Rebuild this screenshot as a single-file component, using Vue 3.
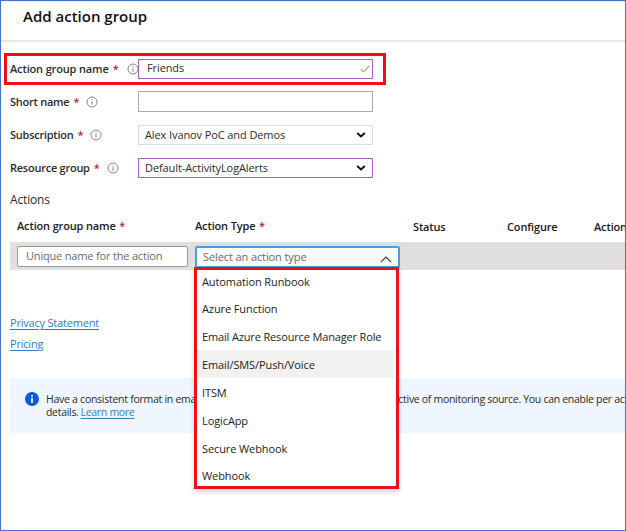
<script setup>
const fields = [
  { label: 'Action group name', value: 'Friends', kind: 'text', tone: 'edited', valid: true },
  { label: 'Short name', value: '', kind: 'text', tone: 'plain' },
  { label: 'Subscription', value: 'Alex Ivanov PoC and Demos', kind: 'select', tone: 'light' },
  { label: 'Resource group', value: 'Default-ActivityLogAlerts', kind: 'select', tone: 'edited' },
]
const actionTypes = [
  'Automation Runbook',
  'Azure Function',
  'Email Azure Resource Manager Role',
  'Email/SMS/Push/Voice',
  'ITSM',
  'LogicApp',
  'Secure Webhook',
  'Webhook',
]
const hovered = 'Email/SMS/Push/Voice'
</script>

<template>
  <div class="blade">
    <header class="title-bar"><h1>Add action group</h1></header>

    <section class="form">
      <div v-for="(f, i) in fields" :key="f.label" class="field" :class="{ first: i === 0 }">
        <div class="label">
          <span class="label-text">{{ f.label }}</span><span class="req">*</span>
          <svg class="hint" viewBox="0 0 12 12">
            <circle cx="6" cy="6" r="5" fill="none" stroke="#777" stroke-width=".9" />
            <path d="M6 5.2V8.6M6 3.2V4.2" stroke="#777" stroke-width="1" />
          </svg>
        </div>
        <div class="control" :class="[f.tone, f.kind]">
          <span>{{ f.value }}</span>
          <svg v-if="f.valid" class="check" viewBox="0 0 10 8">
            <path d="M.8 4.2 3.4 6.8 9.2 1" fill="none" stroke="#7fba4c" stroke-width="1.1" />
          </svg>
          <svg v-if="f.kind === 'select'" class="chevron" viewBox="0 0 10 6">
            <path d="M1.2 1 5 4.5 8.8 1" fill="none" stroke="#111" stroke-width="2" />
          </svg>
        </div>
        <div v-if="i === 0" class="callout"></div>
      </div>
    </section>

    <h2>Actions</h2>
    <div class="grid head">
      <span>Action group name <i>*</i></span>
      <span>Action Type <i>*</i></span>
      <span class="low">Status</span>
      <span class="low">Configure</span>
      <span class="low">Actions</span>
    </div>
    <div class="grid entry">
      <div class="name-input">Unique name for the action</div>
      <div class="type-select">
        <span>Select an action type</span>
        <svg viewBox="0 0 12 7"><path d="M.8 6.2 6 1 11.2 6.2" fill="none" stroke="#333" stroke-width="1.1" /></svg>
        <ul class="menu">
          <li v-for="t in actionTypes" :key="t" :class="{ hovered: t === hovered, wide: t.length > 30 }"><span>{{ t }}</span></li>
        </ul>
      </div>
    </div>

    <nav class="links">
      <a>Privacy Statement</a>
      <a>Pricing</a>
    </nav>

    <aside class="notice">
      <svg viewBox="0 0 14 14">
        <circle cx="7" cy="7" r="7" fill="#0a5bd8" />
        <path d="M7 5.9V10.9M7 3V4.7" stroke="#fff" stroke-width="1.7" />
      </svg>
      <div class="copy">
        <p><span class="lead">Have a consistent format in email notifications,</span><span>irrespective of monitoring source. You can enable per action</span></p>
        <p>details. <a>Learn more</a></p>
      </div>
    </aside>
  </div>
</template>

<style>
body { margin: 0; background: #fff; }
</style>

<style scoped>
* { box-sizing: border-box; }
.blade {
  width: 626px; height: 531px; border: 1px solid #4472c4; overflow: hidden;
  display: flex; flex-direction: column; background: #fff; color: #2b2b2b;
  font: 11px/14px "Open Sans", "Noto Sans", sans-serif;
}
.title-bar { flex: none; height: 41px; border-top: 1px solid #eee; border-bottom: 2px solid #e7e7e7; padding: 2px 0 0 22px; }
h1 { margin: 0; font-size: 15px; line-height: 24px; font-weight: 600; color: #111; letter-spacing: 0; white-space: nowrap; }
.form { flex: none; padding: 10px 0 0 9px; }
.field { position: relative; display: flex; align-items: center; height: 33px; }
.label { width: 128px; display: flex; align-items: center; font-weight: 600; white-space: nowrap; letter-spacing: -.25px; }
.first .label { letter-spacing: -.15px; }
.req { color: #b3262e; margin-left: 4px; }
.hint { width: 12px; height: 12px; margin-left: 7px; flex: none; }
.first .hint { margin-left: 8px; }
.control { width: 235px; height: 20px; border: 1px solid #aaa; display: flex; align-items: center; justify-content: space-between; padding: 0 6px; white-space: nowrap; }
.control span { letter-spacing: -.1px; }
.first .control { padding: 0 2px 2px 8px; }
.control.text { padding-right: 2px; }
.control.plain { height: 21px; }
.control.light { border-color: #ddd; }
.control.edited { border-color: #a95fc3; }
.check { width: 10px; height: 8px; margin-top: 2px; }
.chevron { width: 10px; height: 6px; }
.callout { position: absolute; left: -6px; top: 1px; width: 382px; height: 32px; border: 3px solid #ee0f1a; }
h2 { flex: none; margin: 8px 0 0 9px; font-size: 12px; line-height: 16px; font-weight: 400; letter-spacing: -.15px; }
.grid { flex: none; display: grid; margin-left: 9px; }
.head { margin-top: 11px; height: 23px; padding-left: 7px; grid-template-columns: 178px 219px 94px 87px 60px; color: #1a1a1a; font-weight: 600; letter-spacing: -.15px; white-space: nowrap; }
.head i { font-style: normal; color: #b3262e; margin-left: 1px; }
.head .low { padding-top: 1px; margin-left: -1px; }
.entry { height: 28px; background: #e1dfdd; grid-template-columns: 171px 205px; column-gap: 7px; padding: 4px 0 0 7px; }
.name-input { height: 21px; border: 1px solid #999; border-radius: 2px; background: #fff; color: #6b6b6b; padding: 2px 8px; white-space: nowrap; letter-spacing: -.18px; }
.type-select { position: relative; height: 22px; border: 2px solid #4a9fe0; border-radius: 2px; background: #fafaf8; color: #6b6b6b; display: flex; justify-content: space-between; align-items: center; padding: 0 6px 0 6px; white-space: nowrap; letter-spacing: -.1px; }
.type-select svg { width: 12px; height: 7px; margin-top: 4px; }
.menu { position: absolute; z-index: 2; left: -3px; top: 19px; width: 205px; height: 222px; margin: 0; padding: 0; list-style: none; background: #fff; color: #222; border: 3px solid #ee0f1a; box-shadow: 0 3px 5px rgba(0,0,0,.16); display: grid; grid-template-rows: 24px 30px 26px 28px 28px 28px 28px 27px; }
.menu li { padding: 2px 0 0 5px; display: flex; align-items: center; white-space: nowrap; margin-right: 2px; }
.menu li:first-child, .menu li:last-child { padding-top: 0; }
.menu li:first-child { padding-bottom: 1px; }
.menu li:nth-child(2) { padding-top: 0; }
.menu li.wide { letter-spacing: -.15px; padding-top: 0; }
.menu li.hovered { background: #f2f1f0; }
.links { flex: none; display: flex; flex-direction: column; align-items: flex-start; gap: 7px; padding: 46px 0 0 9px; letter-spacing: -.2px; }
a { color: #2b7fc9; text-decoration: underline; text-underline-offset: 1.5px; }
.notice { flex: none; margin: 27px 0 0 9px; height: 55px; background: #eff6ff; display: flex; padding: 14px 0 0 15px; }
.notice svg { width: 14px; height: 14px; flex: none; }
.copy { margin: 1px 0 0 7px; font-size: 10.5px; line-height: 13px; white-space: nowrap; letter-spacing: -.3px; }
.copy p { margin: 0; display: flex; gap: 2px; }
.lead { flex: none; width: 318px; letter-spacing: -.27px; }
</style>
